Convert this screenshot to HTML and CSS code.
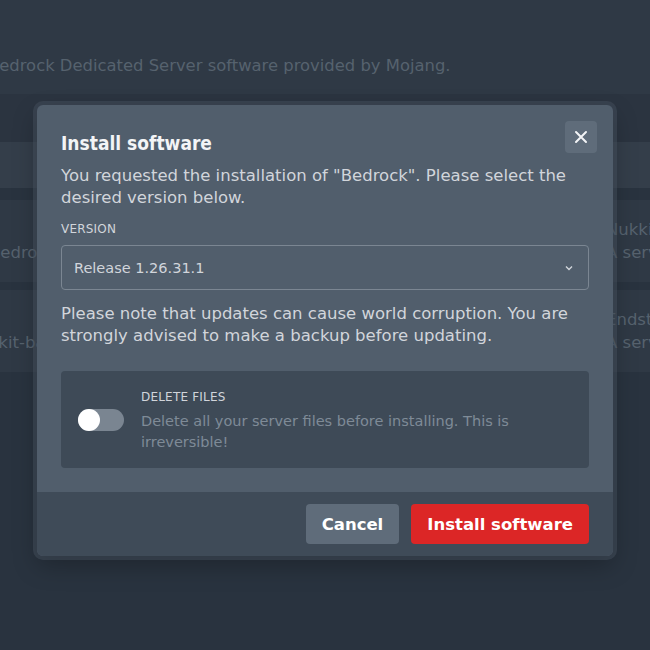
FILE: index.html
```html
<!DOCTYPE html>
<html lang="en">
<head>
  <meta charset="UTF-8">
  <title>Install software</title>
  <link rel="stylesheet" href="styles.css">
</head>
<body>

<div class="page">
  <div class="page-head">
    <p class="page-desc">Bedrock Dedicated Server software provided by Mojang.</p>
  </div>
  <div class="page-band"></div>
  <div class="page-bar"></div>
  <div class="cards">
    <div class="card card-left">
      <p class="card-desc">Bedrock</p>
    </div>
    <div class="card card-right">
      <p class="card-title">Nukkit</p>
      <p class="card-desc">A server</p>
    </div>
    <div class="card card-left">
      <p class="card-desc indent-more">Bukkit-based</p>
    </div>
    <div class="card card-right">
      <p class="card-title">Endstone</p>
      <p class="card-desc">A server</p>
    </div>
  </div>
</div>

<div class="overlay">
  <div class="modal">
    <div class="modal-body">
      <button class="close-btn" aria-label="Close">
        <svg width="14" height="14" viewBox="0 0 14 14"><path d="M2 2 L12 12 M12 2 L2 12" stroke="#f3f4f6" stroke-width="2" stroke-linecap="round"/></svg>
      </button>
      <h2>Install software</h2>
      <p class="text">You requested the installation of "Bedrock". Please select the desired version below.</p>

      <label class="label">Version</label>
      <div class="select">
        <span>Release 1.26.31.1</span>
        <svg width="10" height="10" viewBox="0 0 10 10"><path d="M2 3.5 L5 6.5 L8 3.5" fill="none" stroke="#d1d5db" stroke-width="1.4"/></svg>
      </div>

      <p class="text">Please note that updates can cause world corruption. You are strongly advised to make a backup before updating.</p>

      <div class="option">
        <div class="toggle"><span class="knob"></span></div>
        <div class="option-text">
          <div class="label">Delete files</div>
          <p class="option-desc">Delete all your server files before installing. This is irreversible!</p>
        </div>
      </div>
    </div>
    <div class="modal-foot">
      <button class="btn btn-grey">Cancel</button>
      <button class="btn btn-red">Install software</button>
    </div>
  </div>
</div>

</body>
</html>
```

FILE: styles.css
```css
body {
  margin: 0;
  font-family: "DejaVu Sans", sans-serif;
  background: #29333f;
  color: #d1d5db;
  width: 650px;
  height: 650px;
  overflow: hidden;
  position: relative;
}
p {
  margin: 0;
}

/* dimmed page behind the modal */
.page {
  overflow: hidden;
}
.page-head {
  height: 94px;
  background: #2f3945;
  display: flex;
  align-items: flex-end;
}
.page-desc {
  margin: 0 0 19px -12px;
  font-size: 16.4px;
  color: #56626e;
  white-space: nowrap;
}
.page-band {
  height: 48px;
  background: #2b3440;
}
.page-bar {
  height: 46px;
  background: #343e4a;
}
.cards {
  display: grid;
  grid-template-columns: 325px 325px;
  row-gap: 8px;
  padding-top: 12px;
}
.card {
  height: 82px;
  background: #2f3945;
  display: flex;
  flex-direction: column;
  justify-content: center;
  font-size: 16.5px;
  color: #56626e;
  white-space: nowrap;
  overflow: hidden;
  line-height: 23px;
}
.card-left {
  padding-top: 23px;
  box-sizing: border-box;
  margin-right: 8px;
  text-indent: -11px;
}
.card-left .indent-more {
  text-indent: -33px;
}
.card-right {
  margin-left: 8px;
  padding-left: 273px;
}

/* modal */
.overlay {
  position: absolute;
  inset: 0;
  display: flex;
  justify-content: center;
  align-items: flex-start;
  padding-top: 105px;
}
.modal {
  width: 576px;
  background: #515e6c;
  border-radius: 6px;
  box-shadow: 0 0 0 4px rgba(70, 82, 96, 0.45), 0 10px 25px rgba(0, 0, 0, 0.25);
  overflow: hidden;
}
.modal-body {
  position: relative;
  padding: 26px 24px 24px;
}
.close-btn {
  position: absolute;
  top: 16px;
  right: 16px;
  width: 32px;
  height: 32px;
  border: none;
  border-radius: 4px;
  background: #5f6c7a;
  display: flex;
  align-items: center;
  justify-content: center;
  padding: 0;
}
h2 {
  margin: 0 0 10px;
  font-family: "DejaVu Sans Condensed", "DejaVu Sans", sans-serif;
  font-stretch: condensed;
  font-size: 19px;
  line-height: 24px;
  color: #f3f4f6;
}
.text {
  font-size: 16.5px;
  line-height: 22px;
  color: #d1d5db;
}
.label {
  display: block;
  margin: 12px 0 8px;
  font-size: 12px;
  line-height: 16px;
  text-transform: uppercase;
  color: #d1d5db;
  letter-spacing: 0.2px;
}
.select {
  height: 45px;
  box-sizing: border-box;
  border: 1px solid #7b8692;
  border-radius: 4px;
  padding: 0 14px 0 12px;
  display: flex;
  align-items: center;
  justify-content: space-between;
  font-size: 14.5px;
  color: #d1d5db;
  margin-bottom: 13px;
}
.option {
  margin-top: 24px;
  background: #3e4a57;
  border-radius: 4px;
  display: flex;
  align-items: center;
  padding: 16px 17px 15px 17px;
  min-height: 96px;
  box-sizing: border-box;
}
.toggle {
  width: 46px;
  height: 22px;
  border-radius: 11px;
  background: #7a8591;
  position: relative;
  flex-shrink: 0;
  margin-right: 17px;
}
.knob {
  position: absolute;
  left: 0;
  top: 0;
  width: 22px;
  height: 22px;
  border-radius: 50%;
  background: #ffffff;
}
.option-text {
  padding-top: 2px;
}
.option-text .label {
  margin: 0 0 6px;
}
.option-desc {
  font-size: 14.5px;
  line-height: 21px;
  color: #7f8b97;
}
.modal-foot {
  background: #3f4b58;
  padding: 12px 24px;
  display: flex;
  justify-content: flex-end;
  gap: 12px;
}
.btn {
  height: 40px;
  border: none;
  border-radius: 4px;
  padding: 0 16px;
  font-family: "DejaVu Sans", sans-serif;
  font-size: 16.5px;
  font-weight: bold;
  color: #ffffff;
}
.btn-grey {
  background: #5f6c7a;
}
.btn-red {
  background: #dc2626;
}
```
